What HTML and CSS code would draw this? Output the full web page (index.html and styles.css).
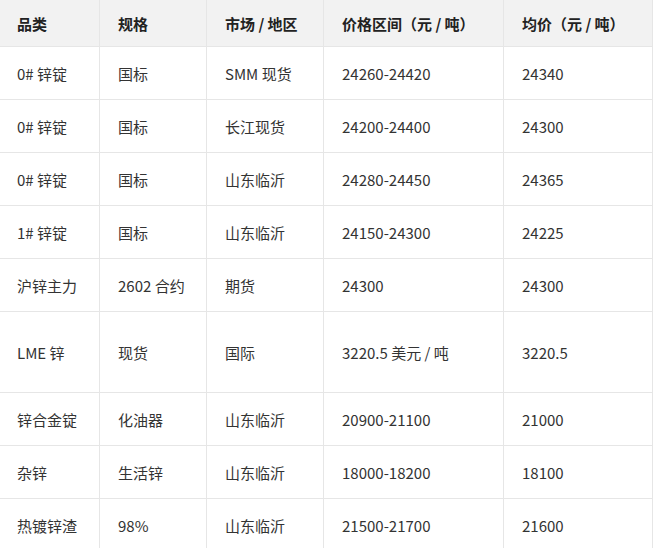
FILE: index.html
```html
<!DOCTYPE html>
<html lang="zh">
<head>
<meta charset="utf-8">
<link rel="stylesheet" href="styles.css">
</head>
<body>
<div class="wrap">
<table class="price-table">
  <colgroup>
    <col class="c1"><col class="c2"><col class="c3"><col class="c4"><col class="c5">
  </colgroup>
  <thead>
    <tr><th>品类</th><th>规格</th><th>市场 / 地区</th><th>价格区间（元 / 吨）</th><th>均价（元 / 吨）</th></tr>
  </thead>
  <tbody>
    <tr><td>0# 锌锭</td><td>国标</td><td>SMM 现货</td><td>24260-24420</td><td>24340</td></tr>
    <tr><td>0# 锌锭</td><td>国标</td><td>长江现货</td><td>24200-24400</td><td>24300</td></tr>
    <tr><td>0# 锌锭</td><td>国标</td><td>山东临沂</td><td>24280-24450</td><td>24365</td></tr>
    <tr><td>1# 锌锭</td><td>国标</td><td>山东临沂</td><td>24150-24300</td><td>24225</td></tr>
    <tr><td>沪锌主力</td><td>2602 合约</td><td>期货</td><td>24300</td><td>24300</td></tr>
    <tr class="tall"><td>LME 锌</td><td>现货</td><td>国际</td><td>3220.5 美元 / 吨</td><td>3220.5</td></tr>
    <tr><td>锌合金锭</td><td>化油器</td><td>山东临沂</td><td>20900-21100</td><td>21000</td></tr>
    <tr><td>杂锌</td><td>生活锌</td><td>山东临沂</td><td>18000-18200</td><td>18100</td></tr>
    <tr><td>热镀锌渣</td><td>98%</td><td>山东临沂</td><td>21500-21700</td><td>21600</td></tr>
  </tbody>
</table>
</div>
</body>
</html>
```

FILE: styles.css
```css
html, body {
  margin: 0;
  padding: 0;
  background: #ffffff;
}
body {
  font-family: "Noto Sans CJK SC", "Noto Sans", sans-serif;
  font-size: 15px;
  color: #333333;
  overflow: hidden;
}
.wrap {
  margin-left: -1px;
}
.price-table {
  border-collapse: separate;
  border-spacing: 0;
  table-layout: fixed;
  width: 654px;
}
.c1 { width: 101px; }
.c2 { width: 107px; }
.c3 { width: 117px; }
.c4 { width: 180px; }
.c5 { width: 149px; }
.price-table th,
.price-table td {
  padding: 0 0 0 18px;
  text-align: left;
  vertical-align: middle;
  border-right: 1px solid #e6e6e6;
  border-bottom: 1px solid #e6e6e6;
  white-space: nowrap;
  overflow: hidden;
}
.price-table th {
  background: #f2f2f2;
  font-weight: 700;
  color: #222222;
}
.price-table thead tr { height: 47px; }
.price-table tbody tr { height: 53px; }
.price-table tbody tr.tall { height: 81px; }
```
